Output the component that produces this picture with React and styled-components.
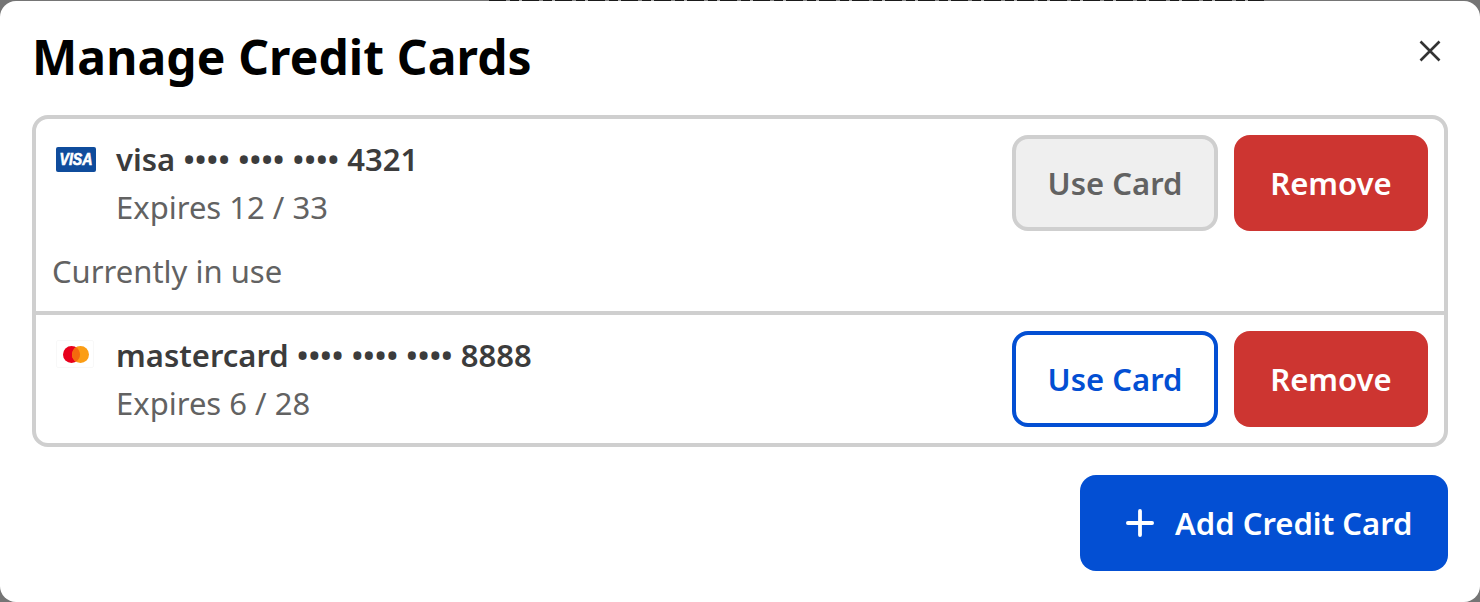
import React from 'react'
import styled, { createGlobalStyle } from 'styled-components'

const Global = createGlobalStyle`
  html, body {
    margin: 0;
    padding: 0;
    background: #757575;
    overflow: hidden;
  }
  * { box-sizing: border-box; }
`

const Page = styled.div`
  width: 1480px;
  height: 602px;
  overflow: hidden;
  padding-top: 1px;
  font-family: "Noto Sans", sans-serif;
  position: relative;
`

// the page behind the dialog peeks out on the very first pixel row
const BackdropText = styled.div`
  position: absolute;
  top: 0;
  left: 489px;
  width: 775px;
  height: 1px;
  background: repeating-linear-gradient(90deg, #1a1a1a 0 17px, #8a8a8a 17px 21px, #1a1a1a 21px 30px, #b0b0b0 30px 33px);
`

const Modal = styled.div`
  height: 601px;
  background: #fff;
  border-radius: 16px;
  padding: 0 32px;
`

const Header = styled.header`
  height: 114px;
  display: flex;
  align-items: flex-start;
  justify-content: space-between;
`

const Title = styled.h1`
  margin: 0;
  padding-top: 24px;
  font-size: 48px;
  line-height: 64px;
  font-weight: 700;
  letter-spacing: 0.1px;
  color: #000;
`

const CloseButton = styled.button`
  width: 32px;
  height: 32px;
  margin: 34px 2px 0 0;
  padding: 0;
  border: 0;
  background: none;
  display: flex;
  align-items: center;
  justify-content: center;
  color: #333;
`

const CardList = styled.div`
  border: 4px solid #cfcfcf;
  border-radius: 16px;
`

const CardRow = styled.div`
  padding: 16px;
  & + & {
    border-top: 4px solid #cfcfcf;
  }
`

const CardMain = styled.div`
  display: flex;
  justify-content: space-between;
  align-items: flex-start;
`

const CardInfo = styled.div`
  display: flex;
  padding-left: 4px;
  gap: 20px;
`

const BrandSlot = styled.div`
  width: 40px;
  height: 26px;
  margin-top: ${p => p.$top}px;
`

const CardName = styled.div`
  font-size: 31px;
  line-height: 48px;
  font-weight: 600;
  color: #3c3c3c;
`

const Expires = styled.div`
  font-size: 31px;
  line-height: 48px;
  color: #626262;
`

const Status = styled.div`
  font-size: 31px;
  line-height: 48px;
  color: #626262;
  margin-top: 16px;
`

const Actions = styled.div`
  display: flex;
  gap: 16px;
`

const Button = styled.button`
  height: 96px;
  padding: 0;
  border-radius: 16px;
  font-family: inherit;
  font-size: 31px;
  font-weight: 600;
  display: flex;
  align-items: center;
  justify-content: center;
`

const UseButton = styled(Button)`
  width: 206px;
  border: 4px solid ${p => (p.disabled ? '#cfcfcf' : '#034fd3')};
  background: ${p => (p.disabled ? '#efefef' : '#fff')};
  color: ${p => (p.disabled ? '#626262' : '#034fd3')};
`

const RemoveButton = styled(Button)`
  width: 194px;
  border: 0;
  background: #cd3531;
  color: #fff;
`

const Footer = styled.div`
  display: flex;
  justify-content: flex-end;
  padding-top: 28px;
`

const AddButton = styled(Button)`
  width: 368px;
  border: 0;
  padding-left: 46px;
  gap: 21px;
  justify-content: flex-start;
  background: #034fd3;
  color: #fff;
`

const VisaIcon = () => (
  <svg width="40" height="26" viewBox="0 0 40 26">
    <rect width="40" height="25" rx="2" fill="#0f4c9c" />
    <text x="20" y="18" textAnchor="middle" textLength="33" lengthAdjust="spacingAndGlyphs" fontFamily="Liberation Sans, sans-serif" fontSize="16" fontWeight="700" fontStyle="italic" fill="#fff" stroke="#fff" strokeWidth="0.6">VISA</text>
  </svg>
)

const MastercardIcon = () => (
  <svg width="40" height="28" viewBox="0 0 40 28">
    <rect x="0.5" y="0.5" width="37" height="27" rx="1.5" fill="#fff" stroke="#f8f8f8" />
    <circle cx="15.5" cy="14.5" r="8.5" fill="#e8001c" />
    <circle cx="24.5" cy="14.5" r="8.5" fill="#fb9d14" />
    <path d="M20 7.3A8.5 8.5 0 0 1 20 21.7A8.5 8.5 0 0 1 20 7.3z" fill="#f46a0e" />
  </svg>
)

const CloseIcon = () => (
  <svg width="22" height="22" viewBox="0 0 22 22" fill="none" stroke="currentColor" strokeWidth="2.6">
    <path d="M1.5 1.5l19 19M20.5 1.5l-19 19" />
  </svg>
)

const PlusIcon = () => (
  <svg width="28" height="28" viewBox="0 0 28 28" fill="none" stroke="currentColor" strokeWidth="3.8" strokeLinecap="round">
    <path d="M14 1.9v24.2M1.9 14h24.2" />
  </svg>
)

const cards = [
  { brand: 'visa', last4: '4321', expires: '12 / 33', inUse: true },
  { brand: 'mastercard', last4: '8888', expires: '6 / 28', inUse: false },
]

export default function App() {
  return (
    <Page>
      <Global />
      <BackdropText />
      <Modal>
        <Header>
          <Title>Manage Credit Cards</Title>
          <CloseButton aria-label="Close"><CloseIcon /></CloseButton>
        </Header>
        <CardList>
          {cards.map((card) => (
            <CardRow key={card.brand}>
              <CardMain>
                <CardInfo>
                  <BrandSlot $top={card.inUse ? 12 : 9}>
                    {card.inUse ? <VisaIcon /> : <MastercardIcon />}
                  </BrandSlot>
                  <div>
                    <CardName>{card.brand} •••• •••• •••• {card.last4}</CardName>
                    <Expires>Expires {card.expires}</Expires>
                  </div>
                </CardInfo>
                <Actions>
                  <UseButton disabled={card.inUse}>Use Card</UseButton>
                  <RemoveButton>Remove</RemoveButton>
                </Actions>
              </CardMain>
              {card.inUse && <Status>Currently in use</Status>}
            </CardRow>
          ))}
        </CardList>
        <Footer>
          <AddButton><PlusIcon />Add Credit Card</AddButton>
        </Footer>
      </Modal>
    </Page>
  )
}
